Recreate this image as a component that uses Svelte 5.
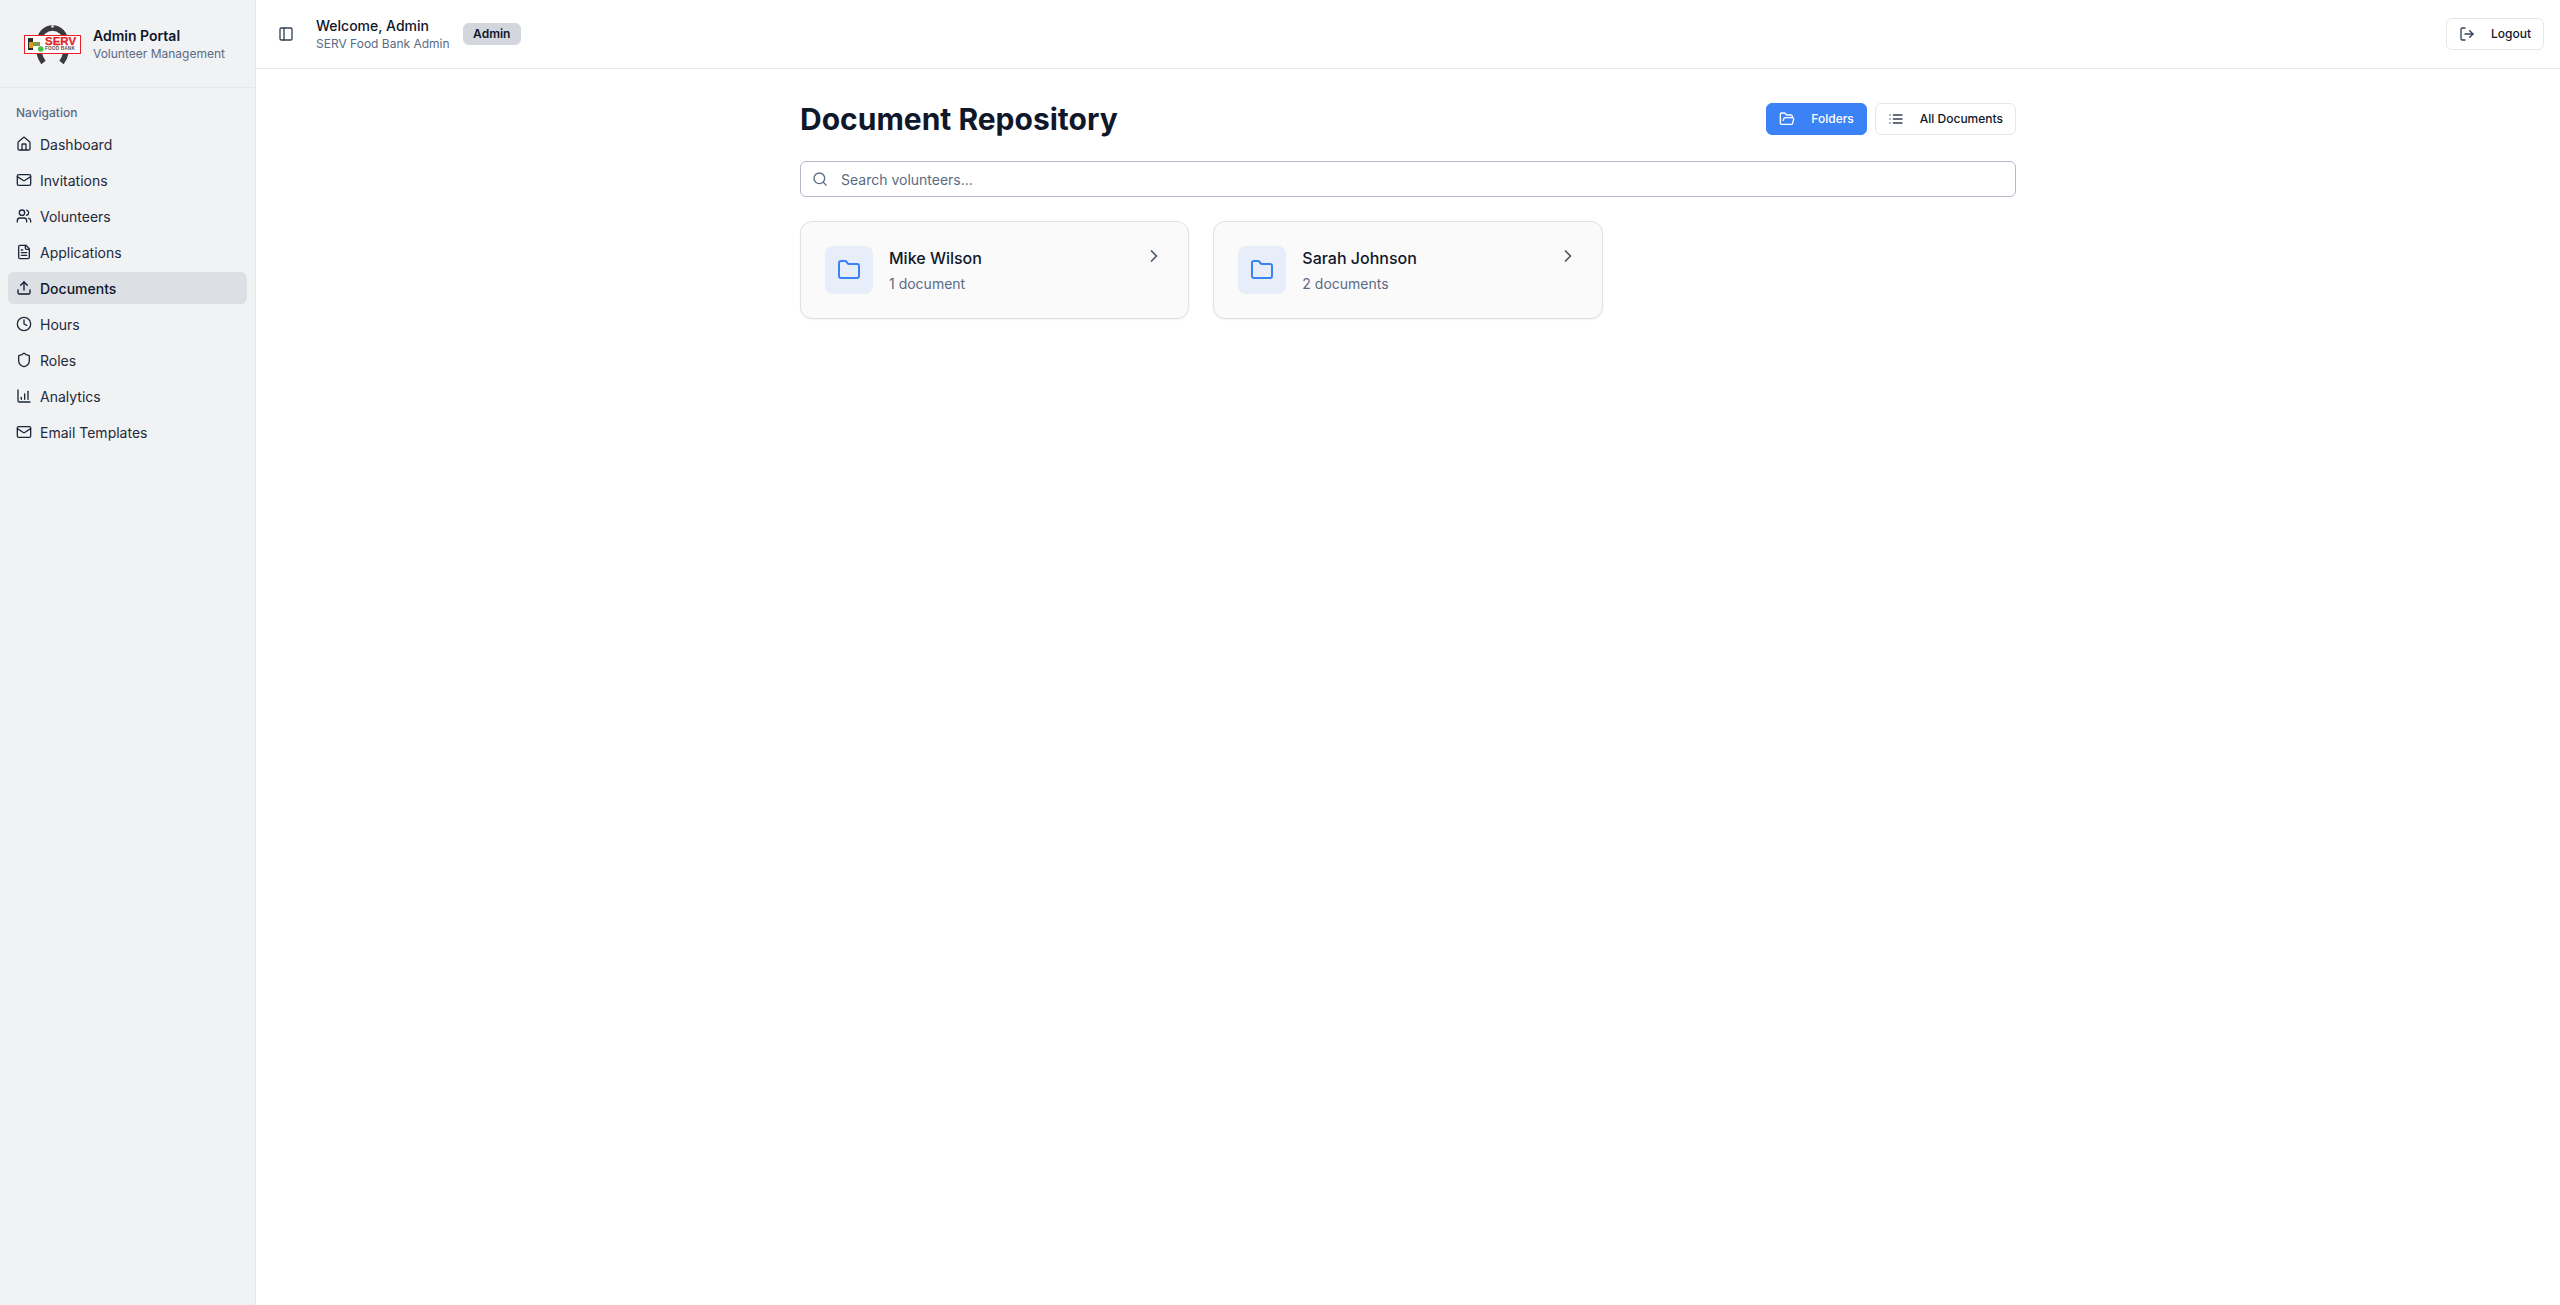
<script>
    const navItems = [
        { label: "Dashboard", icon: "home" },
        { label: "Invitations", icon: "mail" },
        { label: "Volunteers", icon: "users" },
        { label: "Applications", icon: "file" },
        { label: "Documents", icon: "upload", active: true },
        { label: "Hours", icon: "clock" },
        { label: "Roles", icon: "shield" },
        { label: "Analytics", icon: "chart" },
        { label: "Email Templates", icon: "mail" }
    ];

    const folders = [
        { name: "Mike Wilson", count: "1 document" },
        { name: "Sarah Johnson", count: "2 documents" }
    ];
</script>

{#snippet navIcon(name)}
    <svg class="icon" viewBox="0 0 24 24">
        {#if name === "home"}
            <path d="M15 21v-8a1 1 0 0 0-1-1h-4a1 1 0 0 0-1 1v8" />
            <path d="M3 10a2 2 0 0 1 .709-1.528l7-5.999a2 2 0 0 1 2.582 0l7 5.999A2 2 0 0 1 21 10v9a2 2 0 0 1-2 2H5a2 2 0 0 1-2-2z" />
        {:else if name === "mail"}
            <rect x="2" y="4" width="20" height="16" rx="2" />
            <path d="m22 7-8.97 5.7a1.94 1.94 0 0 1-2.06 0L2 7" />
        {:else if name === "users"}
            <path d="M16 21v-2a4 4 0 0 0-4-4H6a4 4 0 0 0-4 4v2" />
            <circle cx="9" cy="7" r="4" />
            <path d="M22 21v-2a4 4 0 0 0-3-3.87" />
            <path d="M16 3.13a4 4 0 0 1 0 7.75" />
        {:else if name === "file"}
            <path d="M15 2H6a2 2 0 0 0-2 2v16a2 2 0 0 0 2 2h12a2 2 0 0 0 2-2V7Z" />
            <path d="M14 2v4a2 2 0 0 0 2 2h4" />
            <path d="M10 9H8" />
            <path d="M16 13H8" />
            <path d="M16 17H8" />
        {:else if name === "upload"}
            <path d="M21 15v4a2 2 0 0 1-2 2H5a2 2 0 0 1-2-2v-4" />
            <polyline points="17 8 12 3 7 8" />
            <line x1="12" x2="12" y1="3" y2="15" />
        {:else if name === "clock"}
            <circle cx="12" cy="12" r="10" />
            <polyline points="12 6 12 12 16 14" />
        {:else if name === "shield"}
            <path d="M20 13c0 5-3.5 7.5-7.66 8.95a1 1 0 0 1-.67-.01C7.5 20.5 4 18 4 13V6a1 1 0 0 1 1-1c2 0 4.5-1.2 6.24-2.72a1.17 1.17 0 0 1 1.52 0C14.51 3.81 17 5 19 5a1 1 0 0 1 1 1z" />
        {:else if name === "chart"}
            <path d="M3 3v16a2 2 0 0 0 2 2h16" />
            <path d="M8 17v-3" />
            <path d="M13 17V9" />
            <path d="M18 17V5" />
        {/if}
    </svg>
{/snippet}

<div class="layout">
    <aside class="sidebar">
        <div class="brand">
            <svg class="logo" viewBox="0 0 58 40">
                <path class="ring" d="M19.5 38.5 C11 28 13 4 28.5 4 C44 4 46 28 37.5 38.5" />
                <circle cx="28.5" cy="2.5" r="1.2" fill="#f1f2f4" />
                <rect x="0.5" y="11.5" width="56" height="18" fill="#fff" stroke="#e8202a" />
                <rect x="4" y="14" width="5" height="12" fill="#2b2a26" />
                <rect x="5" y="18" width="4" height="6" fill="#d99a22" />
                <rect x="9" y="18" width="7" height="4" fill="#7f9a4e" />
                <circle cx="16.7" cy="25" r="2.8" fill="#3fc04a" />
                <text class="serv" x="21" y="21">SERV</text>
                <text class="bank" x="21" y="26">FOOD BANK</text>
            </svg>
            <div>
                <div class="brand-title">Admin Portal</div>
                <div class="brand-sub">Volunteer Management</div>
            </div>
        </div>

        <nav>
            <div class="nav-label">Navigation</div>
            {#each navItems as item}
                <a href="#top" class="nav-item" class:active={item.active}>
                    {@render navIcon(item.icon)}
                    <span>{item.label}</span>
                </a>
            {/each}
        </nav>
    </aside>

    <div class="page">
        <header>
            <svg class="icon toggle" viewBox="0 0 24 24">
                <rect x="3" y="3" width="18" height="18" rx="2" />
                <path d="M9 3v18" />
            </svg>
            <div class="welcome">
                <div class="welcome-title">Welcome, Admin</div>
                <div class="welcome-sub">SERV Food Bank Admin</div>
            </div>
            <span class="badge">Admin</span>
            <button class="btn logout">
                <svg class="icon" viewBox="0 0 24 24">
                    <path d="M9 21H5a2 2 0 0 1-2-2V5a2 2 0 0 1 2-2h4" />
                    <polyline points="16 17 21 12 16 7" />
                    <line x1="21" x2="9" y1="12" y2="12" />
                </svg>
                <span>Logout</span>
            </button>
        </header>

        <main>
            <div class="title-row">
                <h1>Document Repository</h1>
                <div class="view-buttons">
                    <button class="btn primary">
                        <svg class="icon" viewBox="0 0 24 24">
                            <path d="m6 14 1.5-2.9A2 2 0 0 1 9.24 10H20a2 2 0 0 1 1.94 2.5l-1.54 6a2 2 0 0 1-1.95 1.5H4a2 2 0 0 1-2-2V5a2 2 0 0 1 2-2h3.9a2 2 0 0 1 1.69.9l.81 1.2a2 2 0 0 0 1.67.9H18a2 2 0 0 1 2 2v2" />
                        </svg>
                        <span>Folders</span>
                    </button>
                    <button class="btn">
                        <svg class="icon" viewBox="0 0 24 24">
                            <path d="M3 12h.01" />
                            <path d="M3 18h.01" />
                            <path d="M3 6h.01" />
                            <path d="M8 12h13" />
                            <path d="M8 18h13" />
                            <path d="M8 6h13" />
                        </svg>
                        <span>All Documents</span>
                    </button>
                </div>
            </div>

            <div class="search">
                <svg class="icon" viewBox="0 0 24 24">
                    <circle cx="11" cy="11" r="8" />
                    <path d="m21 21-4.3-4.3" />
                </svg>
                <input type="text" placeholder="Search volunteers..." />
            </div>

            <div class="folder-grid">
                {#each folders as folder}
                    <div class="folder-card">
                        <div class="folder-icon">
                            <svg class="icon" viewBox="0 0 24 24">
                                <path d="M20 20a2 2 0 0 0 2-2V8a2 2 0 0 0-2-2h-7.9a2 2 0 0 1-1.69-.9L9.6 3.9A2 2 0 0 0 7.93 3H4a2 2 0 0 0-2 2v13a2 2 0 0 0 2 2Z" />
                            </svg>
                        </div>
                        <div class="folder-text">
                            <div class="folder-name">{folder.name}</div>
                            <div class="folder-count">{folder.count}</div>
                        </div>
                        <svg class="icon chevron" viewBox="0 0 24 24">
                            <path d="m9 18 6-6-6-6" />
                        </svg>
                    </div>
                {/each}
            </div>
        </main>
    </div>
</div>

<style>
:global(body) {
    margin: 0;
    background: #fff;
    color: #0f172a;
    font-family: Inter, "Liberation Sans", sans-serif;
}

.layout {
    display: flex;
    height: 1305px;
}

.icon {
    width: 16px;
    height: 16px;
    flex: none;
    fill: none;
    stroke: currentColor;
    stroke-width: 2;
    stroke-linecap: round;
    stroke-linejoin: round;
}

/* sidebar */
.sidebar {
    width: 255px;
    flex: none;
    background: #f1f2f4;
    border-right: 1px solid #e5e7eb;
}

.brand {
    display: flex;
    align-items: center;
    gap: 11px;
    height: 88px;
    padding: 0 16px 0 24px;
    box-sizing: border-box;
    border-bottom: 1px solid #e5e7eb;
}

.logo {
    width: 58px;
    height: 40px;
    flex: none;
}

.ring {
    fill: none;
    stroke: #3a3a3c;
    stroke-width: 5.5;
}

.serv {
    font-family: "Liberation Sans", sans-serif;
    font-size: 11.5px;
    font-weight: 700;
    fill: #e8202a;
    stroke: #e8202a;
    stroke-width: 0.25px;
}

.bank {
    font-family: "Liberation Sans", sans-serif;
    font-size: 4.8px;
    font-weight: 700;
    letter-spacing: 0.1px;
    fill: #555;
}

.brand-title {
    font-size: 14px;
    font-weight: 600;
    line-height: 20px;
}

.brand-sub {
    font-size: 12px;
    line-height: 16px;
    color: #5a6b85;
}

nav {
    padding: 8px;
}

.nav-label {
    height: 32px;
    padding: 0 8px;
    font-size: 12px;
    font-weight: 500;
    line-height: 34px;
    color: #5a6b85;
}

.nav-item {
    display: flex;
    align-items: center;
    gap: 8px;
    height: 32px;
    margin-bottom: 4px;
    padding: 0 8px;
    border-radius: 6px;
    font-size: 14px;
    color: #1e293b;
    text-decoration: none;
}

.nav-item.active {
    background: #dcdfe4;
    font-weight: 500;
    color: #0f172a;
}

/* header */
.page {
    flex: 1;
    min-width: 0;
}

header {
    display: flex;
    align-items: center;
    height: 69px;
    box-sizing: border-box;
    padding: 0 16px;
    border-bottom: 1px solid #e5e7eb;
}

.toggle {
    color: #334155;
    margin: 0 22px 0 6px;
}

.welcome-title {
    font-size: 14px;
    font-weight: 500;
    line-height: 20px;
}

.welcome-sub {
    font-size: 12px;
    line-height: 16px;
    color: #5a6b85;
}

.badge {
    margin-left: 13px;
    padding: 0 10.5px;
    height: 22px;
    line-height: 22px;
    border-radius: 6px;
    background: #d3d6dd;
    font-size: 12px;
    font-weight: 600;
}

.btn {
    display: flex;
    align-items: center;
    gap: 16px;
    height: 32px;
    padding: 0 12px;
    box-sizing: border-box;
    background: #fff;
    border: 1px solid #e5e7eb;
    border-radius: 6px;
    font-family: inherit;
    font-size: 12px;
    font-weight: 500;
    color: #0f172a;
}

.btn span {
    margin-top: -1px;
}

.btn .icon {
    color: #334155;
}

.logout {
    margin-left: auto;
}

.primary {
    background: #3b82f6;
    border-color: #3b82f6;
    color: #fff;
}

.primary .icon {
    color: #fff;
}

/* main */
main {
    width: 1216px;
    margin: 0 auto;
    padding-top: 32px;
}

.title-row {
    display: flex;
    align-items: center;
    justify-content: space-between;
    margin-bottom: 24px;
}

h1 {
    margin: 0;
    font-size: 30px;
    font-weight: 700;
    line-height: 36px;
}

.view-buttons {
    display: flex;
    gap: 8px;
}

.search {
    display: flex;
    align-items: center;
    gap: 13px;
    height: 36px;
    padding: 0 11px;
    box-sizing: border-box;
    border: 1px solid #b6b8c8;
    border-radius: 6px;
    color: #5a6b85;
}

.search input {
    flex: 1;
    padding: 0;
    border: none;
    outline: none;
    background: transparent;
    font-family: inherit;
    font-size: 14px;
    color: #0f172a;
}

.search input::placeholder {
    color: #5a6b85;
    opacity: 1;
}

.folder-grid {
    display: grid;
    grid-template-columns: repeat(3, 1fr);
    gap: 24px;
    margin-top: 24px;
}

.folder-card {
    display: flex;
    align-items: flex-start;
    gap: 16px;
    height: 98px;
    padding: 24px;
    box-sizing: border-box;
    background: #fafafa;
    border: 1px solid #e0e1e6;
    border-radius: 12px;
    box-shadow: 0 1px 2px rgba(0, 0, 0, 0.05);
}

.folder-icon {
    display: flex;
    align-items: center;
    justify-content: center;
    width: 48px;
    height: 48px;
    flex: none;
    border-radius: 8px;
    background: #e7edf9;
    color: #3b82f6;
}

.folder-icon .icon {
    width: 24px;
    height: 24px;
}

.folder-text {
    flex: 1;
}

.folder-name {
    font-size: 16px;
    font-weight: 500;
    line-height: 24px;
}

.folder-count {
    margin-top: 4px;
    font-size: 14px;
    line-height: 20px;
    color: #5a6b85;
}

.chevron {
    width: 20px;
    height: 20px;
    color: #475569;
}
</style>
